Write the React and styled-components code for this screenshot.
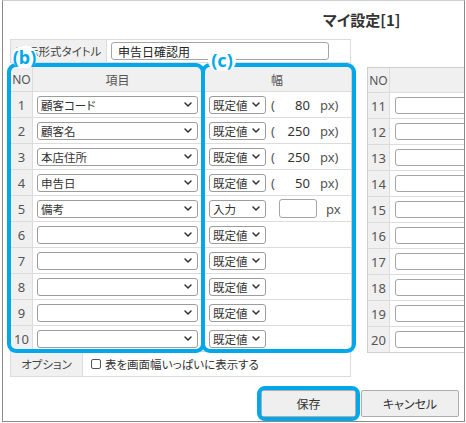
import React from 'react';
import styled, { createGlobalStyle } from 'styled-components';

const BLUE = '#00a8ea';
const FONT = `"Noto Sans CJK JP", "Noto Sans", sans-serif`;
const NUMFONT = `"Noto Sans", "Noto Sans CJK JP", sans-serif`;

const Global = createGlobalStyle`
  html, body { margin: 0; padding: 0; background: #fff; }
  body {
    font-family: ${FONT};
    font-size: 12px;
    color: #333;
    font-feature-settings: "palt" 1;
    overflow: hidden;
  }
`;

const Window = styled.div`
  position: relative;
  box-sizing: border-box;
  margin-left: 2px;
  width: 463px;
  height: 422px;
  border: 1px solid #8a8a8a;
  border-top-color: #cfcfcf;
  background: #fff;
`;

const TitleBar = styled.div`
  box-sizing: border-box;
  height: 38px;
  padding: 9px 0 0 320px;
  font-size: 15px;
  font-weight: bold;
  line-height: 20px;
  color: #333;
`;

const Body = styled.div`
  display: flex;
  align-items: flex-start;
  gap: 15px;
  padding-left: 7px;
`;

const LeftCol = styled.div`
  position: relative;
  flex: none;
  width: 342px;
`;

const FormatRow = styled.div`
  box-sizing: border-box;
  display: grid;
  grid-template-columns: 96px 1fr;
  width: 341px;
  height: 24px;
  border: 1px solid #dcdcdc;
`;

const LabelCell = styled.div`
  display: flex;
  align-items: center;
  justify-content: center;
  background: #f0f0f0;
  border-right: 1px solid #dcdcdc;
  color: #444;
  font-size: 11.5px;
`;

const ValueCell = styled.div`
  display: flex;
  align-items: center;
  padding-left: ${p => p.$pad ?? 4}px;
`;

const TextInput = styled.div`
  box-sizing: border-box;
  display: flex;
  align-items: center;
  width: ${p => p.$w}px;
  height: ${p => p.$h ?? 18}px;
  margin-left: ${p => p.$ml ?? 0}px;
  padding-left: 6px;
  border: 1px solid #a5a5a5;
  border-radius: 3px;
  background: #fff;
  font-size: 12px;
  color: #222;
  flex: none;
`;

const Table = styled.div`
  box-sizing: border-box;
  width: ${p => p.$w}px;
  margin-top: ${p => p.$mt ?? 0}px;
  border: 1px solid #cfcfcf;
  background: #fff;
`;

const Row = styled.div`
  display: grid;
  grid-template-columns: ${p => p.$cols};
  height: ${p => (p.$head ? 24 : 25)}px;
  border-bottom: ${p => (p.$last ? 'none' : '1px solid #dcdcdc')};
  background: ${p => (p.$head ? '#f0f0f0' : '#fff')};
`;

const Cell = styled.div`
  box-sizing: border-box;
  display: flex;
  align-items: center;
  justify-content: ${p => (p.$center ? 'center' : 'flex-start')};
  padding: ${p => p.$pad ?? '0'};
  border-right: ${p => (p.$noBorder ? 'none' : '1px solid #dcdcdc')};
  background: ${p => (p.$gray ? '#f0f0f0' : 'transparent')};
  color: ${p => (p.$gray || p.$muted ? '#555' : '#333')};
  font-family: ${p => (p.$num ? NUMFONT : FONT)};
  font-size: ${p => p.$fs ?? 12}px;
  min-width: 0;
  overflow: hidden;
`;

const SelectBox = styled.div`
  box-sizing: border-box;
  display: flex;
  align-items: center;
  justify-content: space-between;
  flex: ${p => (p.$w ? 'none' : '1')};
  width: ${p => (p.$w ? `${p.$w}px` : 'auto')};
  height: 18px;
  padding: 0 5px 0 3px;
  border: 1px solid #9c9c9c;
  border-radius: 3px;
  background: #fff;
  font-size: 11.5px;
  color: #333;
  white-space: nowrap;
`;

const Paren = styled.span`
  margin-left: 5px;
  font-family: ${NUMFONT};
  font-size: 13px;
  color: #555;
`;

const Num = styled.span`
  width: 35px;
  text-align: right;
  font-family: ${NUMFONT};
  font-size: 13px;
  color: #333;
`;

const Unit = styled.span`
  margin-left: ${p => p.$ml}px;
  font-family: ${NUMFONT};
  font-size: 13px;
  color: #555;
`;

const OptionRow = styled.div`
  box-sizing: border-box;
  display: grid;
  grid-template-columns: 72px 1fr;
  width: 341px;
  height: 25px;
  border: 1px solid #dcdcdc;
  border-top: none;
`;

const Check = styled.span`
  box-sizing: border-box;
  width: 10px;
  height: 10px;
  margin-right: 4px;
  border: 1px solid #555;
  border-radius: 2px;
  background: #fff;
  flex: none;
`;

const OptionText = styled.span`
  font-size: 11.5px;
  color: #333;
`;

const RightArea = styled.div`
  flex: 1;
  min-width: 0;
  overflow: hidden;
`;

const ButtonBar = styled.div`
  display: flex;
  justify-content: flex-end;
  gap: 5px;
  margin-top: 13px;
  padding-right: 5px;
`;

const ButtonWrap = styled.div`
  position: relative;
  &::after {
    content: '';
    display: ${p => (p.$ring ? 'block' : 'none')};
    position: absolute;
    inset: -4px;
    border: 4px solid ${BLUE};
    border-radius: 8px;
    pointer-events: none;
  }
`;

const Button = styled.button`
  box-sizing: border-box;
  display: flex;
  align-items: center;
  justify-content: center;
  width: ${p => p.$w}px;
  height: 27px;
  padding: 0;
  border: 1px solid #adadad;
  border-radius: 2px;
  background: #efefef;
  font-family: ${FONT};
  font-size: 12px;
  color: #333;
  font-feature-settings: "palt" 1;
`;

const Frame = styled.div`
  position: absolute;
  box-sizing: border-box;
  left: ${p => p.$x}px;
  top: 24px;
  width: ${p => p.$w}px;
  height: 290px;
  border: 4px solid ${BLUE};
  border-radius: 9px;
  pointer-events: none;
  z-index: 2;
`;

const Badge = styled.div`
  position: absolute;
  left: ${p => p.$x}px;
  top: ${p => p.$y}px;
  width: ${p => p.$w}px;
  height: 22px;
  display: flex;
  align-items: center;
  justify-content: center;
  background: #fff;
  border-radius: 10px;
  color: ${BLUE};
  font-family: "Noto Sans", sans-serif;
  font-size: 18px;
  font-weight: bold;
  line-height: 1;
  z-index: 3;
`;

const Chevron = () => (
  <svg width="8" height="5" viewBox="0 0 8 5" style={{ flex: 'none' }}>
    <path d="M1 1 L4 4 L7 1" fill="none" stroke="#333" strokeWidth="1.5" strokeLinecap="round" strokeLinejoin="round" />
  </svg>
);

const Select = ({ w, children }) => (
  <SelectBox $w={w}>
    <span>{children}</span>
    <Chevron />
  </SelectBox>
);

const rows = [
  { item: '顧客コード', mode: '既定値', w: 80 },
  { item: '顧客名', mode: '既定値', w: 250 },
  { item: '本店住所', mode: '既定値', w: 250 },
  { item: '申告日', mode: '既定値', w: 50 },
  { item: '備考', mode: '入力' },
  { item: '', mode: '既定値' },
  { item: '', mode: '既定値' },
  { item: '', mode: '既定値' },
  { item: '', mode: '既定値' },
  { item: '', mode: '既定値' },
];

const MAIN_COLS = '22px 170px 1fr';
const RIGHT_COLS = '22px 1fr';

export default function App() {
  return (
    <>
      <Global />
      <Window>
        <TitleBar>マイ設定[1]</TitleBar>
        <Body>
          <LeftCol>
            <FormatRow>
              <LabelCell>表示形式タイトル</LabelCell>
              <ValueCell>
                <TextInput $w={218}>申告日確認用</TextInput>
              </ValueCell>
            </FormatRow>
            <Table $w={342} $mt={3}>
              <Row $head $cols={MAIN_COLS}>
                <Cell $center $gray $num>NO</Cell>
                <Cell $center $muted>項目</Cell>
                <Cell $center $muted $noBorder>幅</Cell>
              </Row>
              {rows.map((r, i) => (
                <Row key={i} $cols={MAIN_COLS} $last={i === rows.length - 1}>
                  <Cell $center $gray $num $fs={13}>{i + 1}</Cell>
                  <Cell $pad="0 4px">
                    <Select>{r.item}</Select>
                  </Cell>
                  <Cell $pad="0 0 0 6px" $noBorder>
                    <Select w={57}>{r.mode}</Select>
                    {r.w != null && (
                      <>
                        <Paren>(</Paren>
                        <Num>{r.w}</Num>
                        <Unit $ml={10}>px)</Unit>
                      </>
                    )}
                    {r.mode === '入力' && (
                      <>
                        <TextInput $w={38} $h={19} $ml={13} />
                        <Unit $ml={9}>px</Unit>
                      </>
                    )}
                  </Cell>
                </Row>
              ))}
            </Table>
            <OptionRow>
              <LabelCell>オプション</LabelCell>
              <ValueCell $pad={8}>
                <Check />
                <OptionText>表を画面幅いっぱいに表示する</OptionText>
              </ValueCell>
            </OptionRow>
            <Frame $x={-3} $w={198} />
            <Frame $x={191} $w={155} />
            <Badge $x={2} $y={7} $w={25}>(b)</Badge>
            <Badge $x={198} $y={10} $w={28}>(c)</Badge>
          </LeftCol>
          <RightArea>
            <Table $w={342} $mt={28}>
              <Row $head $cols={RIGHT_COLS}>
                <Cell $center $gray $num>NO</Cell>
                <Cell $noBorder />
              </Row>
              {rows.map((r, i) => (
                <Row key={i} $cols={RIGHT_COLS} $last={i === rows.length - 1}>
                  <Cell $center $gray $num $fs={13}>{i + 11}</Cell>
                  <Cell $pad="0 0 0 5px" $noBorder>
                    <TextInput $w={160} $h={17} />
                  </Cell>
                </Row>
              ))}
            </Table>
          </RightArea>
        </Body>
        <ButtonBar>
          <ButtonWrap $ring>
            <Button $w={95}>保存</Button>
          </ButtonWrap>
          <ButtonWrap>
            <Button $w={98}>キャンセル</Button>
          </ButtonWrap>
        </ButtonBar>
      </Window>
    </>
  );
}
